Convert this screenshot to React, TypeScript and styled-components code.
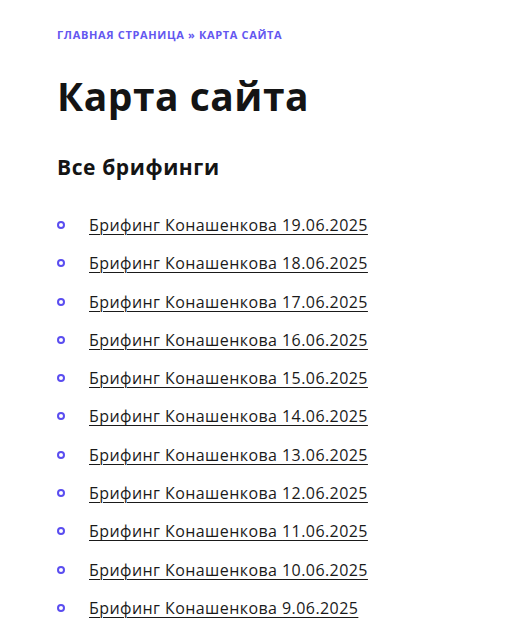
import React from "react";
import styled, { createGlobalStyle } from "styled-components";

const Global = createGlobalStyle`
  html, body { margin: 0; padding: 0; background: #fff; }
  body { font-family: "Open Sans", "Noto Sans", sans-serif; color: #161616; }
`;

const Page = styled.main`
  padding: 28px 57px 0 57px;
  display: flex;
  flex-direction: column;
`;

const Crumbs = styled.nav`
  font-size: 11px;
  font-weight: 700;
  text-transform: uppercase;
  color: #6457f0;
  letter-spacing: 0.65px;
  line-height: 14px;
`;

const Title = styled.h1`
  margin: 30px 0 0 0;
  font-size: 39px;
  font-weight: 700;
  line-height: 48px;
  letter-spacing: 0.5px;
  color: #141414;
`;

const Subtitle = styled.h2`
  margin: 34px 0 0 0;
  font-size: 21px;
  font-weight: 700;
  line-height: 26px;
  letter-spacing: 0.6px;
  color: #141414;
`;

const List = styled.ul`
  list-style: none;
  margin: 34px 0 0 0;
  padding: 0;
  display: flex;
  flex-direction: column;
  gap: 16.3px;
`;

const Item = styled.li`
  display: flex;
  align-items: center;
  height: 22px;
`;

const Bullet = styled.span`
  width: 4px;
  height: 4px;
  border: 2px solid #5a4df0;
  border-radius: 50%;
  margin-left: 0;
  margin-right: 24px;
  flex: none;
`;

const Link = styled.a`
  font-size: 16px;
  color: #1a1a1a;
  letter-spacing: 0.43px;
  text-decoration: underline;
  text-underline-offset: 3px;
  text-decoration-thickness: 1px;
`;

const dates = [
  "19.06.2025",
  "18.06.2025",
  "17.06.2025",
  "16.06.2025",
  "15.06.2025",
  "14.06.2025",
  "13.06.2025",
  "12.06.2025",
  "11.06.2025",
  "10.06.2025",
  "9.06.2025",
];

export default function App() {
  return (
    <>
      <Global />
      <Page>
        <Crumbs>Главная страница » Карта сайта</Crumbs>
        <Title>Карта сайта</Title>
        <Subtitle>Все брифинги</Subtitle>
        <List>
          {dates.map((d) => (
            <Item key={d}>
              <Bullet />
              <Link href="#">Брифинг Конашенкова {d}</Link>
            </Item>
          ))}
        </List>
      </Page>
    </>
  );
}
